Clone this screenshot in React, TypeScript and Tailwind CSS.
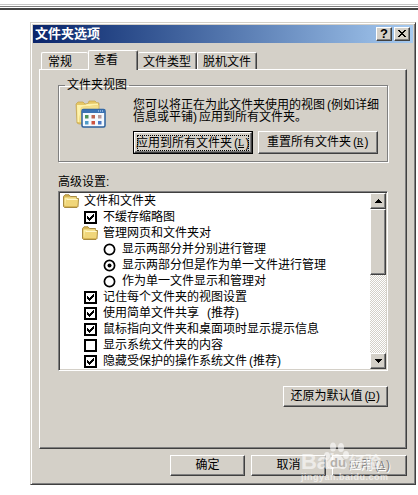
import type { ReactNode } from "react";

type Row = {
  kind: "folder" | "check" | "radio";
  label: string;
  indent: string;
  on?: boolean;
};

const rows: Row[] = [
  { kind: "folder", label: "文件和文件夹", indent: "pl-[3px]" },
  { kind: "check", label: "不缓存缩略图", indent: "pl-[22px]", on: true },
  { kind: "folder", label: "管理网页和文件夹对", indent: "pl-[22px]" },
  { kind: "radio", label: "显示两部分并分别进行管理", indent: "pl-[41px]" },
  { kind: "radio", label: "显示两部分但是作为单一文件进行管理", indent: "pl-[41px]", on: true },
  { kind: "radio", label: "作为单一文件显示和管理对", indent: "pl-[41px]" },
  { kind: "check", label: "记住每个文件夹的视图设置", indent: "pl-[22px]", on: true },
  { kind: "check", label: "使用简单文件共享 (推荐)", indent: "pl-[22px]", on: true },
  { kind: "check", label: "鼠标指向文件夹和桌面项时显示提示信息", indent: "pl-[22px]", on: true },
  { kind: "check", label: "显示系统文件夹的内容", indent: "pl-[22px]" },
  { kind: "check", label: "隐藏受保护的操作系统文件(推荐)", indent: "pl-[22px]", on: true },
];

const raised =
  "border border-t-white border-l-white border-r-[#404040] border-b-[#404040] shadow-[inset_-1px_-1px_0_#808080] bg-[#d4d0c8]";

// half-width characters take exactly half of a 12px ideograph
function Text({ children }: { children: string }) {
  return (
    <>
      {children.split(/([() ])/).map((part, i) => {
        if (part === "(") return <span key={i} className="inline-block w-[6px] text-right">(</span>;
        if (part === ")") return <span key={i} className="inline-block w-[6px]">)</span>;
        if (part === " ") return <span key={i} className="inline-block w-[6px] whitespace-pre"> </span>;
        return part;
      })}
    </>
  );
}

function Button({ className, children }: { className: string; children: ReactNode }) {
  return (
    <button
      type="button"
      className={`${raised} flex shrink-0 items-center justify-center whitespace-pre pb-px ${className}`}
    >
      {children}
    </button>
  );
}

function Key({ letter }: { letter: string }) {
  return (
    <span className="flex">
      <span className="w-[6px] text-right">(</span>
      <span className="flex w-[6px] justify-center font-['Liberation_Serif'] text-[10px] underline underline-offset-1">
        {letter}
      </span>
      <span className="w-[6px] pl-px">)</span>
    </span>
  );
}

function FolderIcon() {
  return (
    <svg width="16" height="14" viewBox="0 0 16 14" className="shrink-0">
      <path d="M.5 2.500 2 .8h4l1.500 1.700h6v2h2L15 12.500l-1 1H1.500l-1-1z" fill="#d8b655" stroke="#a08236" strokeWidth=".9" />
      <path d="M1.500 3.500h12v1.300H5L3 6.500v5H1.500z" fill="#fbf0a6" />
      <path d="M3 5h12l-.7 7H2z" fill="#f0d67a" />
      <path d="M3.500 5.500h11" stroke="#fff8cc" />
    </svg>
  );
}

function CheckBox({ on }: { on?: boolean }) {
  return (
    <svg width="13" height="13" viewBox="0 0 13 13" shapeRendering="crispEdges" className="shrink-0">
      <rect x="1" y="1" width="11" height="11" fill="#fff" stroke="#000" strokeWidth="2" />
      {on && <path d="M3 5h1v1h1v1h1V6h1V5h1V4h1V3h1v3H9v1H8v1H7v1H6v1H5V9H4V8H3z" fill="#000" />}
    </svg>
  );
}

function Radio({ on }: { on?: boolean }) {
  return (
    <svg width="13" height="13" viewBox="0 0 13 13" className="shrink-0">
      <circle cx="6.5" cy="6.5" r="5.1" fill="#fff" stroke="#000" strokeWidth="1.7" />
      {on && <circle cx="6.5" cy="6.5" r="2" fill="#000" />}
    </svg>
  );
}

function ViewIcon() {
  return (
    <svg width="32" height="30" viewBox="0 0 32 30" className="shrink-0">
      <path d="M1 4 3 2h5l2 2 3-.5L14 1h6l1.500 1.500 2.500.5v19l-2 2H4l-2-1z" fill="#e6c765" stroke="#c2a24a" strokeWidth=".7" />
      <path d="M2 5h8l2-1 11-.5V5L6 7 4 22H2.500z" fill="#fdf2ac" />
      <path d="M6 7 23.500 5v17H4z" fill="#f3de8a" />
      <rect x="7" y="9.5" width="23" height="17.500" rx="1.5" fill="#f4f9ff" stroke="#2c609c" strokeWidth="1.5" />
      <path d="M7 9.500h23V13H7z" fill="#3971b3" />
      <path d="M23 11h1m1 0h1m1 0h1" stroke="#cfe3ff" />
      <path d="M10 15h3.500v3.500H10z" fill="#4d9357" />
      <path d="M16.500 15H20v3.500h-3.500z" fill="#bd6552" />
      <path d="M23 15h3.500v3.500H23z" fill="#b99a9a" />
      <path d="M10 21h3.500v3.500H10z" fill="#4f9bc8" />
      <path d="M16.500 21H20v3.500h-3.500z" fill="#cf5340" />
      <path d="M23 21h3.500v3.500H23z" fill="#4b78c4" />
    </svg>
  );
}

function Arrow({ down }: { down?: boolean }) {
  return (
    <span className={`${raised} flex h-4 w-4 shrink-0 items-center justify-center`}>
      <svg width="7" height="4" viewBox="0 0 7 4" shapeRendering="crispEdges">
        <path d={down ? "M0 0h7v1H6v1H5v1H4v1H3V3H2V2H1V1H0z" : "M3 0h1v1h1v1h1v1h1v1H0V3h1V2h1V1h1z"} />
      </svg>
    </span>
  );
}

function Tab({ className, children }: { className: string; children: ReactNode }) {
  return (
    <div
      className={`flex shrink-0 justify-center rounded-t-[2px] border border-b-0 border-t-white border-l-white border-r-[#404040] bg-[#d4d0c8] pt-px shadow-[inset_-1px_0_0_#808080] ${className}`}
    >
      {children}
    </div>
  );
}

function Watermark() {
  return (
    <svg
      width="92"
      height="44"
      viewBox="0 0 92 44"
      className="pointer-events-none absolute left-[300px] top-[440px]"
      fill="#fff"
      fillOpacity=".6"
    >
      <text x="1" y="29" fontSize="22" fontWeight="700" fontFamily="Liberation Sans" textLength="34">
        Bai
      </text>
      <ellipse cx="27" cy="16" rx="3" ry="4" />
      <ellipse cx="33" cy="7" rx="3" ry="4.500" />
      <ellipse cx="41" cy="7.500" rx="3" ry="4.500" />
      <ellipse cx="46" cy="15" rx="3" ry="4" />
      <path d="M37 14c4 0 5 4 8 7 4 4 1 9-3 8-3-1-7-1-10 0-4 1-7-4-4-8 3-3 5-7 9-7z" />
      <text x="30" y="27" fontSize="13" fontWeight="700" fontFamily="Liberation Sans" fill="#b4b1ab" fillOpacity="1">
        du
      </text>
      <text x="49" y="28" fontSize="16" fontWeight="700" fontFamily="'Noto Sans CJK SC'" textLength="32">
        经验
      </text>
      <text x="1" y="40" fontSize="9" fontWeight="700" fontFamily="Liberation Sans" textLength="87">
        jingyan.baidu.com
      </text>
    </svg>
  );
}

export default function App() {
  return (
    <div className="relative h-[495px] w-[418px] overflow-hidden bg-white font-['Liberation_Sans','Noto_Sans_CJK_SC',sans-serif] text-[12px] leading-[16px] text-black">
      <div className="flex h-[22px] flex-col pt-1">
        <div className="h-px bg-[#c6c6c6]" />
        <div className="mt-px h-px bg-[#808080]" />
        <div className="mt-px h-[2px] bg-[#444]" />
      </div>

      <div className="ml-[30px] flex h-[463px] w-[386px] flex-col border border-t-[#d4d0c8] border-l-[#d4d0c8] border-r-[#404040] border-b-[#404040] bg-[#d4d0c8] p-[2px] shadow-[inset_1px_1px_0_#fff,inset_-1px_-1px_0_#808080]">
        <div className="flex h-[18px] shrink-0 items-center bg-linear-to-r from-[#0a246a] to-[#a6caf0] pl-[2px] pr-[3px]">
          <span className="grow pb-px text-[13px] font-bold text-white">文件夹选项</span>
          <Button className="h-[14px] w-4 text-[13px] font-bold">?</Button>
          <Button className="ml-[2px] h-[14px] w-4">
            <svg width="8" height="7" viewBox="0 0 8 7" shapeRendering="crispEdges">
              <path d="M0 0h2v1h1v1h2V1h1V0h2v1H7v1H6v1H5v1h1v1h1v1h1v1H6V6H5V5H3v1H2v1H0V6h1V5h1V4h1V3H2V2H1V1H0z" />
            </svg>
          </Button>
        </div>

        <div className="mt-[7px] flex h-[19px] shrink-0 items-end pl-2">
          <Tab className="h-[17px] w-[47px] border-r-0 pr-[10px] shadow-none">常规</Tab>
          <Tab className="z-10 -mb-px h-5 w-[50px] pr-[14px]">查看</Tab>
          <Tab className="h-[17px] w-[59px] border-l-0">文件类型</Tab>
          <Tab className="h-[17px] w-[60px]">脱机文件</Tab>
        </div>

        <div className="ml-[6px] flex h-[380px] w-[368px] shrink-0 flex-col border border-t-white border-l-white border-r-[#404040] border-b-[#404040] pl-[18px] shadow-[inset_-1px_-1px_0_#808080]">
          <fieldset className="mt-[7px] h-[85px] w-[330px] shrink-0 border border-[#808080] pl-4 shadow-[1px_1px_0_#fff,inset_1px_1px_0_#fff]">
            <legend className="-ml-[10px] px-[2px]">文件夹视图</legend>
            <div className="flex pt-[6px]">
              <div className="w-[58px] shrink-0 pt-px">
                <ViewIcon />
              </div>
              <div>
                <p className="whitespace-nowrap leading-[12px]">
                  <Text>您可以将正在为此文件夹使用的视图(例如详细</Text>
                  <br />
                  <Text>信息或平铺)应用到所有文件夹。</Text>
                </p>
                <div className="mt-[8px] flex gap-[5px]">
                  <div className="flex h-[23px] w-[120px] border border-black">
                    <Button className="h-full w-full p-[2px]">
                      <span className="flex h-full w-full items-center justify-center border border-dotted border-black">
                        应用到所有文件夹
                        <Key letter="L" />
                      </span>
                    </Button>
                  </div>
                  <Button className="h-[23px] w-[120px]">
                    重置所有文件夹
                    <Key letter="R" />
                  </Button>
                </div>
              </div>
            </div>
          </fieldset>

          <div className="mt-[12px] h-[17px] shrink-0">高级设置:</div>

          <div className="flex h-[180px] w-[330px] shrink-0 border border-t-[#808080] border-l-[#808080] border-r-white border-b-white bg-white p-px shadow-[inset_1px_1px_0_#404040,inset_-1px_-1px_0_#d4d0c8]">
            <ul className="grow">
              {rows.map((r) => (
                <li key={r.label} className={`flex h-4 items-center whitespace-nowrap ${r.indent}`}>
                  <span className="flex w-[19px] shrink-0">
                    {r.kind === "folder" && <FolderIcon />}
                    {r.kind === "check" && (
                      <span className="ml-[2px]">
                        <CheckBox on={r.on} />
                      </span>
                    )}
                    {r.kind === "radio" && (
                      <span className="ml-[2px]">
                        <Radio on={r.on} />
                      </span>
                    )}
                  </span>
                  <span className="ml-[2px]">
                    <Text>{r.label}</Text>
                  </span>
                </li>
              ))}
            </ul>
            <div className="flex w-4 shrink-0 flex-col bg-[repeating-conic-gradient(#fff_0_25%,#d4d0c8_0_50%)] bg-size-[2px_2px]">
              <Arrow />
              <div className={`${raised} h-[66px]`} />
              <div className="grow" />
              <Arrow down />
            </div>
          </div>

          <Button className="ml-[225px] mt-[15px] h-[21px] w-[105px]">
            还原为默认值
            <Key letter="D" />
          </Button>
        </div>

        <div className="mt-[6px] flex gap-[6px] pl-[137px]">
          <Button className="h-[21px] w-[75px]">确定</Button>
          <Button className="h-[21px] w-[75px]">取消</Button>
          <Button className="h-[21px] w-[75px] text-[#808080] [text-shadow:1px_1px_0_#fff]">
            应用
            <Key letter="A" />
          </Button>
        </div>
      </div>
      <Watermark />
    </div>
  );
}
